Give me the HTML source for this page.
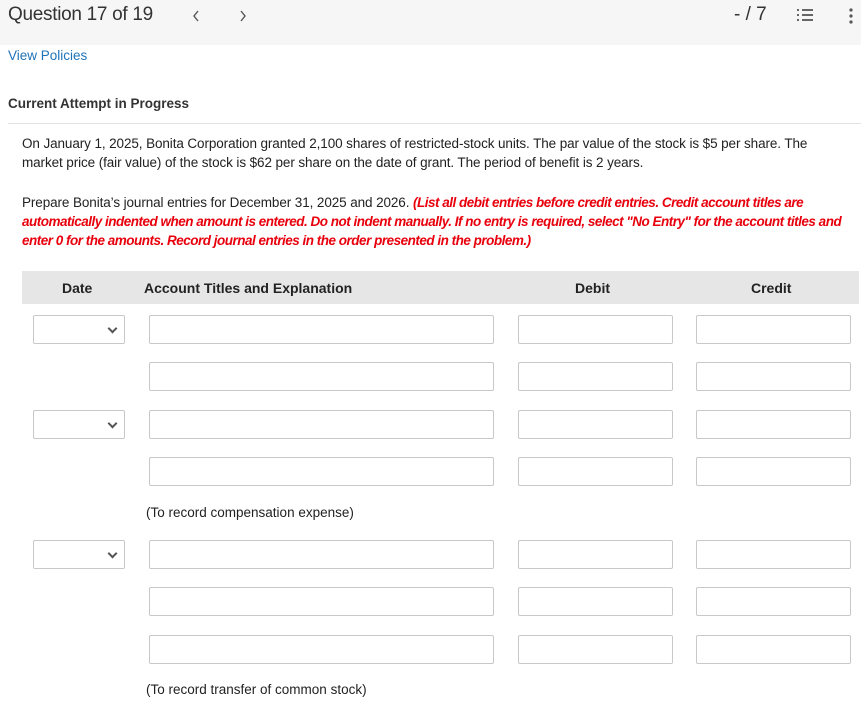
<!DOCTYPE html>
<html><head><style>
body{margin:0;width:861px;height:712px;position:relative;font-family:"Liberation Sans",sans-serif;background:#fff;overflow:hidden;color:#222}
.a{position:absolute}
.top{left:0;top:0;width:861px;height:45px;background:#f6f6f6}
.in{position:absolute;border:1px solid #c8c8c8;border-radius:2px;background:#fff;box-sizing:border-box;height:29px}
.sel::after{content:"";position:absolute;right:8px;top:9px;width:5px;height:5px;border-right:2px solid #555;border-bottom:2px solid #555;transform:rotate(45deg)}
.p{font-size:13.5px;line-height:19px;letter-spacing:-0.1px}
</style></head><body>
<div class="a top"></div>
<div class="a" style="left:8px;top:4px;font-size:19px;color:#333;letter-spacing:-0.3px">Question 17 of 19</div>
<svg class="a" style="left:192px;top:10px" width="8" height="12"><path d="M6 1L2 6L6 11" stroke="#555" stroke-width="1.4" fill="none"/></svg>
<svg class="a" style="left:239px;top:10px" width="8" height="12"><path d="M2 1L6 6L2 11" stroke="#555" stroke-width="1.4" fill="none"/></svg>
<div class="a" style="left:734px;top:4px;font-size:19px;color:#333">- / 7</div>
<svg class="a" style="left:796px;top:7px" width="18" height="16"><g fill="#666"><rect x="6" y="2" width="11" height="2"/><rect x="6" y="7" width="11" height="2"/><rect x="6" y="12" width="11" height="2"/><rect x="1" y="2" width="2" height="2"/><rect x="1" y="7" width="2" height="2"/><rect x="1" y="12" width="2" height="2"/></g></svg>
<svg class="a" style="left:848px;top:8px" width="6" height="16"><g fill="#555"><circle cx="3" cy="2" r="1.6"/><circle cx="3" cy="8" r="1.6"/><circle cx="3" cy="14" r="1.6"/></g></svg>
<div class="a" style="left:8px;top:48px;font-size:13.5px;color:#1f73b7">View Policies</div>
<div class="a" style="left:8px;top:96px;font-size:13.5px;font-weight:bold;color:#333">Current Attempt in Progress</div>
<div class="a" style="left:8px;top:123px;width:853px;border-top:1px solid #e2e2e2"></div>
<div class="a p" style="left:22px;top:134px;width:825px">On January 1, 2025, Bonita Corporation granted 2,100 shares of restricted-stock units. The par value of the stock is $5 per share. The market price (fair value) of the stock is $62 per share on the date of grant. The period of benefit is 2 years.</div>
<div class="a p" style="left:22px;top:193px;width:835px">Prepare Bonita’s journal entries for December 31, 2025 and 2026. <b><i style="color:#e8000d;letter-spacing:-0.5px">(List all debit entries before credit entries. Credit account titles are automatically indented when amount is entered. Do not indent manually. If no entry is required, select "No Entry" for the account titles and enter 0 for the amounts. Record journal entries in the order presented in the problem.)</i></b></div>
<div class="a" style="left:22px;top:271px;width:837px;height:33px;background:#e6e6e6;font-size:14px;font-weight:bold;line-height:34px">
<span class="a" style="left:40px">Date</span><span class="a" style="left:122px">Account Titles and Explanation</span><span class="a" style="left:553px">Debit</span><span class="a" style="left:729px">Credit</span></div>
<div class="in sel" style="left:33px;top:315px;width:92px"></div>
<div class="in sel" style="left:33px;top:410px;width:92px"></div>
<div class="in sel" style="left:33px;top:540px;width:92px"></div>
<div id="rows"></div>
<script>
var ys=[315,362,410,457,540,587,635],h='';
ys.forEach(function(y){h+='<div class="in" style="left:149px;top:'+y+'px;width:345px"></div><div class="in" style="left:518px;top:'+y+'px;width:155px"></div><div class="in" style="left:696px;top:'+y+'px;width:155px"></div>';});
document.getElementById('rows').innerHTML=h;
</script>
<div class="a" style="left:146px;top:505px;font-size:13.5px">(To record compensation expense)</div>
<div class="a" style="left:146px;top:682px;font-size:13.5px">(To record transfer of common stock)</div>
</body></html>
